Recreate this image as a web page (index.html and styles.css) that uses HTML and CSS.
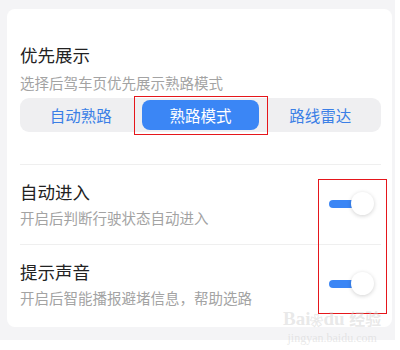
FILE: index.html
```html
<!doctype html>
<html lang="zh-CN">
  <head>
    <meta charset="UTF-8" />
    <meta name="viewport" content="width=device-width, initial-scale=1.0" />
    <title>熟路设置</title>
    <link rel="stylesheet" href="styles.css">
  </head>
  <body>
    <div class="screen">
      <div class="card">
        <div class="section">
          <div class="title">优先展示</div>
          <div class="desc">选择后驾车页优先展示熟路模式</div>
          <div class="segmented">
            <div class="segment">自动熟路</div>
            <div class="segment active">熟路模式</div>
            <div class="segment">路线雷达</div>
          </div>
        </div>

        <div class="row">
          <div class="row-text">
            <div class="title">自动进入</div>
            <div class="desc">开启后判断行驶状态自动进入</div>
          </div>
          <div class="toggle on"><span class="track"></span><span class="knob"></span></div>
        </div>

        <div class="row">
          <div class="row-text">
            <div class="title">提示声音</div>
            <div class="desc">开启后智能播报避堵信息，帮助选路</div>
          </div>
          <div class="toggle on"><span class="track"></span><span class="knob"></span></div>
        </div>
      </div>
    </div>

    <!-- annotation boxes -->
    <div class="mark mark-mode"></div>
    <div class="mark mark-toggles"></div>

    <div class="watermark">
      <div class="wm-logo">Bai<span class="paw">❀</span>du <span class="wm-cn">经验</span></div>
      <div class="wm-url">jingyan.baidu.com</div>
    </div>
  </body>
</html>
```

FILE: styles.css
```css
body {
  margin: 0;
  background-color: #fff;
  font-family: "Noto Sans CJK SC", "Noto Sans", sans-serif;
  color: #222;
}
.screen {
  width: 385px;
  height: 331px;
  padding: 9px 3px 0 7px;
  background-color: #f4f4f6;
}
.card {
  background-color: #fff;
  border-radius: 8px;
  padding: 34px 11px 0 13px;
  height: 284px;
}
.title {
  font-size: 17.5px;
  line-height: 24px;
  color: #222;
}
.desc {
  font-size: 14.5px;
  line-height: 20px;
  color: #a3a3a3;
  margin-top: 6px;
}
.segmented {
  display: grid;
  grid-template-columns: repeat(3, 1fr);
  margin-top: 5px;
  height: 34px;
  padding: 2px 1px;
  box-sizing: border-box;
  background-color: #efeff1;
  border-radius: 9px;
}
.segment {
  display: flex;
  align-items: center;
  justify-content: center;
  font-size: 15.5px;
  color: #3b7fe6;
  border-radius: 8px;
}
.segment.active {
  background-color: #3b86f5;
  color: #fff;
  margin: 0 1px;
}
.section {
  padding-bottom: 32px;
}
.row {
  display: flex;
  align-items: center;
  border-top: 1px solid #efefef;
  padding: 15px 0 16px;
}
.row .desc {
  margin-top: 4px;
}
.row-text {
  flex: 1;
}
.toggle {
  position: relative;
  width: 45px;
  height: 24px;
  margin-right: 7px;
}
.track {
  position: absolute;
  left: 0;
  top: 8px;
  width: 34px;
  height: 8px;
  border-radius: 4px;
  background-color: #3b86f5;
}
.knob {
  position: absolute;
  right: 0;
  top: 0;
  width: 23px;
  height: 23px;
  border-radius: 50%;
  background-color: #fff;
  box-shadow: 0 1px 4px rgba(0, 0, 0, 0.18);
}
.mark {
  position: absolute;
  border: 1px solid #e5161b;
}
.mark-mode {
  left: 134px;
  top: 96px;
  width: 132px;
  height: 37px;
}
.mark-toggles {
  left: 318px;
  top: 179px;
  width: 67px;
  height: 133px;
}
.watermark {
  position: absolute;
  left: 283px;
  top: 308px;
  color: rgba(205, 205, 205, 0.45);
  font-family: "Liberation Serif", serif;
  text-align: center;
}
.wm-logo {
  font-size: 19px;
  font-weight: bold;
  line-height: 20px;
}
.paw {
  font-size: 13px;
}
.wm-cn {
  font-family: "Noto Sans CJK SC", sans-serif;
  font-size: 16px;
}
.wm-url {
  font-size: 12px;
  line-height: 14px;
}
```
